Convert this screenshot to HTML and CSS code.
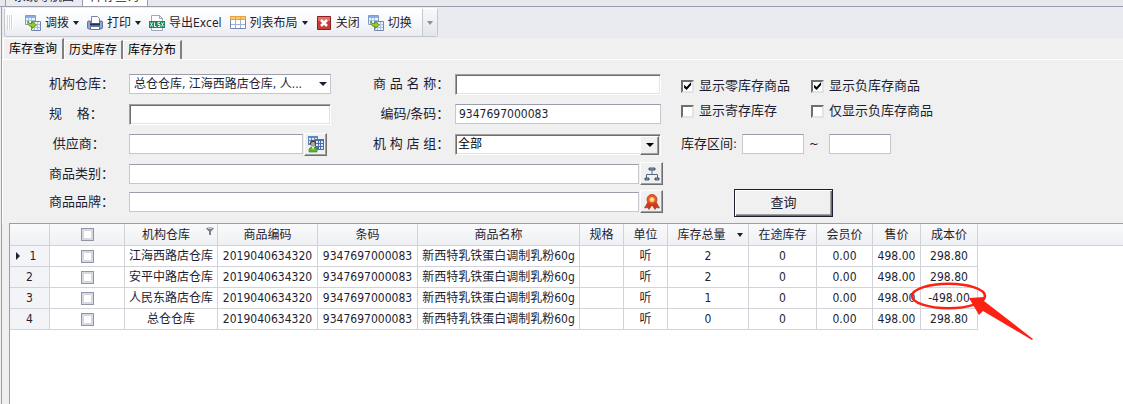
FILE: index.html
```html
<!DOCTYPE html>
<html lang="zh-CN">
<head>
  <meta charset="UTF-8" />
  <meta name="viewport" content="width=device-width, initial-scale=1.0" />
  <title>库存查询</title>
  <link rel="stylesheet" href="styles.css">
</head>
<body>
  <nav class="doc-tabs">
    <button class="doc-tab">系统导航图</button>
    <button class="doc-tab active">库存查询</button>
  </nav>

  <div class="window">
    <div class="toolbar-row">
      <div class="toolbar">
        <span class="grip"></span>
        <button class="tool">
          <svg width="16" height="16" viewBox="0 0 16 16">
            <path d="M.5.5h10v9H.5z" fill="#eef4fc" stroke="#7f9ccb"/>
            <path d="M1 1h9v2H1z" fill="#86aee0"/>
            <path d="M3.500 3v6M6.500 3v6M1 5.500h9" stroke="#a9c0e2"/>
            <path d="M6.500 6.500h9v9h-9z" fill="#eef4fc" stroke="#6f86b4"/>
            <path d="M9.500 7v8M12.500 7v8M7 9.500h8M7 12.500h8" stroke="#a9c0e2"/>
            <path d="M3 6c0 2 1 2.500 4 2.500V6.500l4.500 3.500L7 13.500v-2C4 11.500 2 9 3 6z" fill="#9ccc1c" stroke="#4c8a10" stroke-width=".8"/>
          </svg>
          调拨<i class="caret"></i>
        </button>
        <button class="tool">
          <svg width="16" height="16" viewBox="0 0 16 16">
            <path d="M4.500 1.500h6l2 2v5h-8z" fill="#fff" stroke="#7583a8"/>
            <path d="M1 6h2.500v3h9V6H15l.5 1v6l-1 1h-13l-1-1V7z" fill="#8fa5cc" stroke="#4c5f8c" stroke-width=".8"/>
            <path d="M3 8.500h10v2H3z" fill="#263350"/>
            <path d="M3.500 11.500h9v3h-9z" fill="#fff" stroke="#5f73a0"/>
          </svg>
          打印<i class="caret"></i>
        </button>
        <button class="tool">
          <svg width="16" height="16" viewBox="0 0 16 16">
            <path d="M2.500.5h8l3 3v12h-11z" fill="#fff" stroke="#a0a8b8"/>
            <path d="M10.500.5v3h3" fill="none" stroke="#a0a8b8"/>
            <path d="M0 6h16v7H0z" fill="#168c5a"/>
            <path d="M1.500 7.500l2 4M3.500 7.500l-2 4M5.500 7.500v4h2M11 7.500H9v2h2v2H9M12.500 7.500l2 4M14.500 7.500l-2 4" fill="none" stroke="#fff" stroke-width=".9"/>
          </svg>
          导出Excel
        </button>
        <button class="tool">
          <svg width="16" height="16" viewBox="0 0 16 16">
            <path d="M.5 1.500h15v12H.5z" fill="#fff" stroke="#7186b0"/>
            <path d="M0 1h16v4H0z" fill="#e8a23c"/>
            <path d="M1 2h4v2H1zM6 2h4v2H6zM11 2h4v2h-4z" fill="#f8c878"/>
            <path d="M5.500 5v8M10.500 5v8M1 9.500h14" stroke="#9fb0d0"/>
          </svg>
          列表布局<i class="caret"></i>
        </button>
        <button class="tool">
          <svg width="16" height="16" viewBox="0 0 16 16">
            <path d="M1.500 1.500h13v13h-13z" fill="#cc3a34" stroke="#8c1f1f"/>
            <path d="M2 2h12v4H2z" fill="#e07068"/>
            <path d="M5 5l6 6M11 5l-6 6" stroke="#fff" stroke-width="2.600"/>
          </svg>
          关闭
        </button>
        <button class="tool">
          <svg width="16" height="16" viewBox="0 0 16 16">
            <path d="M.5.5h10v9H.5z" fill="#eef4fc" stroke="#7f9ccb"/>
            <path d="M1 1h9v2H1z" fill="#86aee0"/>
            <path d="M3.500 3v6M6.500 3v6M1 5.500h9" stroke="#a9c0e2"/>
            <path d="M6.500 6.500h9v9h-9z" fill="#eef4fc" stroke="#6f86b4"/>
            <path d="M9.500 7v8M12.500 7v8M7 9.500h8M7 12.500h8" stroke="#a9c0e2"/>
            <path d="M3 6c0 2 1 2.500 4 2.500V6.500l4.500 3.500L7 13.500v-2C4 11.500 2 9 3 6z" fill="#9ccc1c" stroke="#4c8a10" stroke-width=".8"/>
          </svg>
          切换
        </button>
        <button class="more" aria-label="更多"><i class="caret"></i></button>
      </div>
    </div>

    <nav class="page-tabs">
      <button class="page-tab active">库存查询</button>
      <button class="page-tab">历史库存</button>
      <button class="page-tab">库存分布</button>
    </nav>

    <form class="search">
      <div class="fields">
        <div class="fields-top">
          <label for="warehouse">机构仓库：</label>
          <span class="combo">
            <select id="warehouse"><option>总仓仓库, 江海西路店仓库, 人...</option></select>
          </span>
          <label for="goodsName" class="second">商 品 名 称：</label>
          <input type="text" id="goodsName" class="sunken" />

          <label for="spec">规&nbsp;&nbsp;&nbsp;&nbsp;格：</label>
          <input type="text" id="spec" class="sunken" />
          <label for="barcode" class="second">&nbsp;&nbsp;编码/条码：</label>
          <input type="text" id="barcode" value="9347697000083" />

          <label for="supplier">&nbsp;供应商：</label>
          <span class="picker">
            <input type="text" id="supplier" />
            <button type="button" class="pick" aria-label="选择供应商">
              <svg width="18" height="18" viewBox="0 0 18 18">
                <path d="M1 1h10v9H1z" fill="#5f86bd"/>
                <path d="M2 3h2v2H2zM5 3h2v2H5zM8 3h2v2H8zM2 6h2v2H2zM8 6h2v2H8z" fill="#dce9f8"/>
                <path d="M8 4h9v11H8z" fill="#4b6fa6"/>
                <path d="M9 6h2v2H9zM12 6h1v2h-1zM14 6h2v2h-2zM9 9h2v2H9zM12 9h1v2h-1zM14 9h2v2h-2zM12 12h1v2h-1zM14 12h2v2h-2z" fill="#dce9f8"/>
                <circle cx="6" cy="8" r="3" fill="#4a4a4a"/>
                <circle cx="6" cy="9" r="2" fill="#b9a795"/>
                <path d="M2 17v-3l2-2h4l2 2v3z" fill="#5cb52e" stroke="#2f7d1a" stroke-width=".6"/>
                <path d="M5 12h2l-1 3z" fill="#fff"/>
              </svg>
            </button>
          </span>
          <label for="group" class="second">机 构 店 组：</label>
          <span class="combo classic">
            <select id="group"><option>全部</option></select>
          </span>
        </div>

        <div class="fields-bottom">
          <label for="category">商品类别：</label>
          <span class="picker">
            <input type="text" id="category" />
            <button type="button" class="pick" aria-label="选择类别">
              <svg width="16" height="16" viewBox="0 0 16 16">
                <path d="M8 4v4M2.500 12V8.500h11V12" fill="none" stroke="#566a86"/>
                <path d="M5 2h6v2H5zM1 12h4v2H1zM11 12h4v2h-4z" fill="#8fb0d4" stroke="#26344c" stroke-width=".8"/>
              </svg>
            </button>
          </span>
          <label for="brand">商品品牌：</label>
          <span class="picker">
            <input type="text" id="brand" />
            <button type="button" class="pick" aria-label="选择品牌">
              <svg width="16" height="16" viewBox="0 0 16 16">
                <path d="M4 8l-3.500 6 3-.5 1.500 2L8 11l3 4.500 1.500-2 3 .5L12 8z" fill="#cf3c1c" stroke="#a02a10" stroke-width=".6"/>
                <circle cx="8" cy="5.500" r="5" fill="#e8562a" stroke="#b83a18" stroke-width=".8"/>
                <circle cx="8" cy="5.500" r="2.600" fill="#f8c860"/>
                <circle cx="8" cy="5.500" r="1.200" fill="#fff0b0"/>
              </svg>
            </button>
          </span>
        </div>
      </div>

      <div class="options">
        <div class="checks">
          <label><input type="checkbox" checked />显示零库存商品</label>
          <label><input type="checkbox" checked />显示负库存商品</label>
          <label><input type="checkbox" />显示寄存库存</label>
          <label><input type="checkbox" />仅显示负库存商品</label>
        </div>
        <div class="range">
          <label for="rangeFrom">库存区间:</label>
          <input type="text" id="rangeFrom" />
          <label for="rangeTo">~</label>
          <input type="text" id="rangeTo" />
        </div>
        <button type="button" class="query">查询</button>
      </div>
    </form>

    <div class="grid">
      <table>
        <colgroup>
          <col class="c-no"><col class="c-check"><col class="c-store"><col class="c-code"><col class="c-code">
          <col class="c-name"><col class="c-unit"><col class="c-unit"><col class="c-total"><col class="c-way">
          <col class="c-vip"><col class="c-price"><col class="c-cost"><col>
        </colgroup>
        <thead>
          <tr>
            <th></th>
            <th><input type="checkbox" aria-label="全选" /></th>
            <th class="has-filter">机构仓库<svg class="filter" width="8" height="8" viewBox="0 0 8 8"><path d="M0 1.500C0 0 8 0 8 1.500L5 4.500V8H3V4.500z" fill="#7c8190"/><path d="M2 1.500h4" stroke="#d8dbe2" stroke-width=".8"/></svg></th>
            <th>商品编码</th>
            <th>条码</th>
            <th>商品名称</th>
            <th>规格</th>
            <th>单位</th>
            <th class="sorted">库存总量<i class="caret"></i></th>
            <th>在途库存</th>
            <th>会员价</th>
            <th>售价</th>
            <th>成本价</th>
            <th class="rest"></th>
          </tr>
        </thead>
        <tbody>
          <tr>
            <td class="no current">1</td>
            <td><input type="checkbox" aria-label="选择第1行" /></td>
            <td>江海西路店仓库</td><td>2019040634320</td><td>9347697000083</td><td>新西特乳铁蛋白调制乳粉60g</td>
            <td></td><td>听</td><td>2</td><td>0</td><td>0.00</td><td>498.00</td><td>298.80</td><td class="rest"></td>
          </tr>
          <tr>
            <td class="no">2</td>
            <td><input type="checkbox" aria-label="选择第2行" /></td>
            <td>安平中路店仓库</td><td>2019040634320</td><td>9347697000083</td><td>新西特乳铁蛋白调制乳粉60g</td>
            <td></td><td>听</td><td>2</td><td>0</td><td>0.00</td><td>498.00</td><td>298.80</td><td class="rest"></td>
          </tr>
          <tr>
            <td class="no">3</td>
            <td><input type="checkbox" aria-label="选择第3行" /></td>
            <td>人民东路店仓库</td><td>2019040634320</td><td>9347697000083</td><td>新西特乳铁蛋白调制乳粉60g</td>
            <td></td><td>听</td><td>1</td><td>0</td><td>0.00</td><td>498.00</td><td>-498.00</td><td class="rest"></td>
          </tr>
          <tr>
            <td class="no">4</td>
            <td><input type="checkbox" aria-label="选择第4行" /></td>
            <td>总仓仓库</td><td>2019040634320</td><td>9347697000083</td><td>新西特乳铁蛋白调制乳粉60g</td>
            <td></td><td>听</td><td>0</td><td>0</td><td>0.00</td><td>498.00</td><td>298.80</td><td class="rest"></td>
          </tr>
        </tbody>
      </table>
      <svg class="mark" width="130" height="64" viewBox="0 0 130 64">
        <ellipse cx="38.500" cy="16" rx="36.500" ry="12.200" fill="none" stroke="#fb2113" stroke-width="2.600"/>
        <path d="M59 18l16-1-1 4 49 38-1 1-49-29-4 4z" fill="#fb2113"/>
      </svg>
    </div>
  </div>
</body>
</html>
```
FILE: styles.css
```css
* {
  box-sizing: border-box;
}
body {
  margin: 0;
  min-height: 100vh;
  display: flex;
  flex-direction: column;
  background: #f0f0f0;
  color: #1e1e32;
  font-family: "DejaVu Sans Condensed", "Noto Sans CJK SC", sans-serif;
  font-size: 12px;
  line-height: 16px;
}
button, input, select {
  font: inherit;
  color: inherit;
  margin: 0;
  padding: 0;
  border-radius: 0;
}
.caret {
  border: 3px solid transparent;
  border-top: 4px solid #1e1e32;
  border-bottom: 0;
}

/* document tabs, only their lower edge is in view */
.doc-tabs {
  display: flex;
  align-items: flex-end;
  height: 7px;
  padding-left: 5px;
  overflow: hidden;
  background: #e6e8ed;
  border-bottom: 1px solid #9a9eac;
}
.doc-tab {
  height: 18px;
  padding: 0 8px;
  background: #e9ebf0;
  border: 1px solid #9a9eac;
  border-width: 0 0 0 1px;
  white-space: nowrap;
}
.doc-tab.active {
  background: #fff;
  border-right-width: 1px;
}

.window {
  flex: 1;
  display: flex;
  flex-direction: column;
  margin-left: 1px;
  border-left: 1px solid #9c9cac;
}
.toolbar-row {
  padding: 1px 2px;
  background: #e9ebf0;
}
.toolbar {
  display: inline-flex;
  height: 29px;
  padding-left: 2px;
  vertical-align: top;
  background: linear-gradient(#fff, #f7f8fb 50%, #e9ebf1);
  border: 1px solid #c4c7d0;
  border-top-color: #fff;
  border-radius: 3px;
}
.grip {
  width: 6px;
  margin: 6px 8px 6px 0;
  background: repeating-linear-gradient(90deg, #d3d5dc 0 1px, #fff 1px 2px);
}
.tool {
  display: flex;
  align-items: center;
  gap: 4px;
  padding: 0 4px;
  background: none;
  border: 0;
}
.more {
  display: flex;
  align-items: center;
  justify-content: center;
  width: 15px;
  margin-left: 6px;
  background: linear-gradient(#f8f9fb, #e3e5ec);
  border: 0;
  border-left: 1px solid #c4c7d0;
}
.more .caret {
  border-top-color: #8a8e9a;
}

.page-tabs {
  display: flex;
  align-items: flex-end;
  height: 22px;
  padding-left: 1px;
  border-bottom: 1px solid #fff;
}
.page-tab {
  height: 19px;
  padding: 0 4px;
  background: #f0f0f0;
  border: 1px solid #fff;
  border-right: 2px solid #808080;
  border-bottom: 0;
  color: #000;
}
.page-tab.active {
  height: 21px;
  padding: 0 5px;
}

.search {
  display: flex;
  gap: 18px;
  padding: 13px 0 6px 46px;
  border-left: 1px solid #fff;
  font-size: 13px;
}
.fields-top {
  display: grid;
  grid-template-columns: 80px 202px 124px 206px;
  grid-auto-rows: 22px;
  gap: 8px 0;
  align-items: center;
}
.fields-bottom {
  display: grid;
  grid-template-columns: 80px 534px;
  grid-auto-rows: 23px;
  gap: 5px 0;
  align-items: center;
  margin-top: 7px;
}
.fields label {
  white-space: nowrap;
}
.second {
  padding-left: 42px;
}
input[type="text"] {
  width: 100%;
  height: 20px;
  padding: 0 3px;
  background: #fff;
  border: 1px solid #c6c6d0;
  border-top-color: #9c9cac;
  outline: 0;
  font-size: 12px;
}
input.sunken {
  height: 21px;
  border-color: #a0a0a0 #fff #fff #a0a0a0;
  box-shadow: inset 1px 1px #6e6e6e, inset -1px -1px #e3e3e3;
}
.combo {
  position: relative;
  display: block;
}
.combo::after {
  content: "";
  position: absolute;
  top: 8px;
  right: 4px;
  border: 4px solid transparent;
  border-top-color: #1e1e32;
  border-bottom: 0;
  pointer-events: none;
}
select {
  appearance: none;
  display: block;
  width: 100%;
  height: 20px;
  padding: 0 4px;
  background: #fff;
  border: 1px solid #c6c6d0;
  border-top-color: #9c9cac;
  font-size: 12px;
}
.classic::before {
  content: "";
  position: absolute;
  top: 2px;
  right: 2px;
  width: 17px;
  height: 17px;
  background: #f0f0f0;
  border: 1px solid #fff;
  border-right-color: #6e6e6e;
  border-bottom-color: #6e6e6e;
  box-shadow: inset -1px -1px #a0a0a0;
  pointer-events: none;
}
.classic::after {
  top: 9px;
  right: 7px;
  border-top-color: #000;
}
.classic select {
  height: 21px;
  padding: 0 2px;
  border-color: #a0a0a0 #fff #fff #a0a0a0;
  box-shadow: inset 1px 1px #6e6e6e, inset -1px -1px #e3e3e3;
  color: #000;
}
.picker {
  display: flex;
  align-items: center;
  gap: 1px;
}
.fields-top .picker {
  width: 198px;
}
.picker input {
  flex: 1;
  min-width: 0;
}
.pick {
  display: flex;
  align-items: center;
  justify-content: center;
  width: 23px;
  height: 23px;
  background: #f0f0f0;
  border: 1px solid #fff;
  border-right-color: #6e6e6e;
  border-bottom-color: #6e6e6e;
  box-shadow: inset -1px -1px #a0a0a0;
}

.options {
  padding-top: 5px;
}
.checks {
  display: grid;
  grid-template-columns: 130px auto;
  gap: 9px 0;
  width: max-content;
}
.checks label {
  display: flex;
  align-items: center;
  gap: 5px;
}
.checks input {
  appearance: none;
  width: 13px;
  height: 13px;
  background: #fff;
  border: 2px solid #e3e3e3;
  border-top-color: #6e6e6e;
  border-left-color: #6e6e6e;
}
.checks input:checked::before {
  content: "";
  display: block;
  width: 9px;
  height: 9px;
  background: #000;
  clip-path: polygon(12% 35%, 40% 60%, 90% 5%, 90% 40%, 40% 95%, 12% 70%);
}
.range {
  display: flex;
  align-items: center;
  gap: 5px;
  margin-top: 15px;
}
.range input {
  width: 62px;
}
.range label:last-of-type {
  width: 15px;
}
.query {
  display: block;
  width: 99px;
  height: 28px;
  margin: 35px 0 0 53px;
  background: #f0f0f0;
  border: 1px solid #1e1e32;
  box-shadow: inset 1px 1px #fff, inset -1px -1px #6e6e6e, inset -2px -2px #a0a0a0;
}

.grid {
  position: relative;
  flex: 1;
  margin-left: 7px;
  background: #fff;
  border: 1px solid #9c9cac;
  border-width: 1px 0 0 1px;
}
table {
  width: 100%;
  table-layout: fixed;
  border-collapse: separate;
  border-spacing: 0;
}
th, td {
  height: 21px;
  padding: 0;
  border: 1px solid #d2d3d9;
  border-width: 0 1px 1px 0;
  font-weight: normal;
  text-align: center;
  white-space: nowrap;
}
th {
  height: 22px;
  background: linear-gradient(#fafafb, #eff0f3);
}
th.rest {
  border-right: 0;
}
td.rest {
  border: 0;
}
.c-no { width: 40px; }
.c-check { width: 75px; }
.c-store { width: 93px; }
.c-code { width: 100px; }
.c-name { width: 162px; }
.c-unit { width: 44px; }
.c-total { width: 81px; }
.c-way { width: 68px; }
.c-vip { width: 56px; }
.c-price { width: 48px; }
.c-cost { width: 57px; }
td.no {
  background: #f3f4f7;
}
td.current::before {
  content: "";
  display: inline-block;
  margin-right: 10px;
  border: 4px solid transparent;
  border-left-color: #1e1e32;
  border-right: 0;
}
td.current {
  padding-right: 7px;
}
table input {
  appearance: none;
  display: block;
  width: 13px;
  height: 13px;
  margin: 0 auto;
  background: #fff;
  border: 1px solid #9296a4;
  box-shadow: inset 0 0 0 2px #d6d9e1;
}
.has-filter, .sorted {
  position: relative;
}
.has-filter {
  padding-right: 10px;
}
.filter {
  position: absolute;
  top: 3px;
  right: 3px;
}
.sorted {
  padding-right: 13px;
}
.sorted .caret {
  position: absolute;
  top: 9px;
  right: 5px;
}
/* red note drawn over the negative cost */
.mark {
  position: absolute;
  top: 56px;
  left: 900px;
  pointer-events: none;
}
```
